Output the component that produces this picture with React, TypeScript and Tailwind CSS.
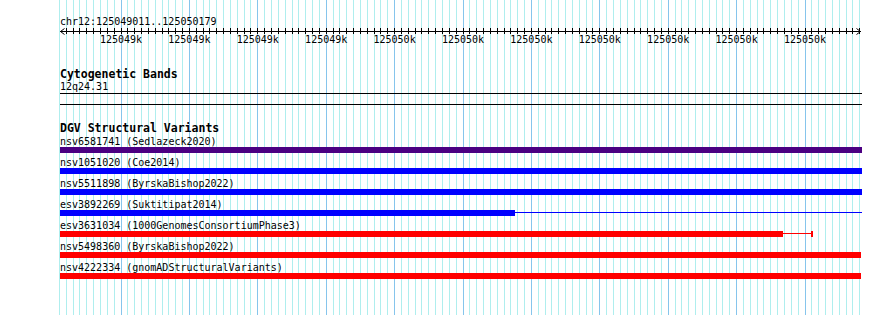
const PX_PER_BP = 0.684;
const FIRST_MAJOR_X = 121; // position of 125049100
const VIEW_LEFT = 60;

// grid / ticks every 10bp, darker every 100bp
const gridLines = Array.from({ length: 118 }, (_, i) => {
  const k = i - 9;
  return {
    x: Math.floor(FIRST_MAJOR_X + k * 10 * PX_PER_BP),
    major: ((k % 10) + 10) % 10 === 0,
  };
});

const labels = Array.from({ length: 11 }, (_, m) => {
  const bp = 125049100 + m * 100;
  return {
    x: FIRST_MAJOR_X + m * 100 * PX_PER_BP,
    text: `${Math.round(bp / 1000)}k`,
  };
});

type Variant = {
  id: string;
  source: string;
  bg: string;
  thick: number;
  thin?: number;
  cap?: boolean;
};

const variants: Variant[] = [
  { id: "nsv6581741", source: "Sedlazeck2020", bg: "bg-[#4b0082]", thick: 802 },
  { id: "nsv1051020", source: "Coe2014", bg: "bg-[#0000ff]", thick: 802 },
  { id: "nsv5511898", source: "ByrskaBishop2022", bg: "bg-[#0000ff]", thick: 802 },
  { id: "esv3892269", source: "Suktitipat2014", bg: "bg-[#0000ff]", thick: 455, thin: 347 },
  {
    id: "esv3631034",
    source: "1000GenomesConsortiumPhase3",
    bg: "bg-[#ff0000]",
    thick: 723,
    thin: 28,
    cap: true,
  },
  { id: "nsv5498360", source: "ByrskaBishop2022", bg: "bg-[#ff0000]", thick: 801 },
  { id: "nsv4222334", source: "gnomADStructuralVariants", bg: "bg-[#ff0000]", thick: 801 },
];

function Grid() {
  return (
    <svg className="absolute left-0 top-0" width={890} height={315}>
      {gridLines.map((l, i) => (
        <rect
          key={i}
          x={l.x}
          y={0}
          width={1}
          height={315}
          fill={l.major ? "#86c5ec" : "#afeeee"}
        />
      ))}
    </svg>
  );
}

function Ruler() {
  return (
    <div className="relative h-[18px]">
      <svg className="absolute left-0 top-0" width={802} height={8}>
        <rect x={0} y={3} width={801} height={1} fill="#000" />
        {gridLines.map((l, i) => (
          <rect key={i} x={l.x - VIEW_LEFT} y={0} width={1} height={6} fill="#000" />
        ))}
        <polyline points="4.5,0.5 0.5,3.5 4.5,6.5" fill="none" stroke="#000" strokeWidth={1} />
        <polyline points="796.5,0.5 800.5,3.5 796.5,6.5" fill="none" stroke="#000" strokeWidth={1} />
      </svg>
      {labels.map((l) => (
        <span
          key={l.x}
          className="absolute top-[6px] -translate-x-1/2 whitespace-nowrap text-[10px] leading-[12px]"
          style={{ left: l.x - VIEW_LEFT }}
        >
          {l.text}
        </span>
      ))}
    </div>
  );
}

function VariantRow({ v }: { v: Variant }) {
  return (
    <div className="pt-[2px] pb-[2px]">
      <div className="whitespace-pre text-[10px] leading-[11px]">
        {v.id} ({v.source})
      </div>
      <div className="flex h-[6px] items-start">
        <div className={`h-[6px] ${v.bg}`} style={{ width: v.thick }} />
        {v.thin && <div className={`mt-[2px] h-px ${v.bg}`} style={{ width: v.thin }} />}
        {v.cap && <div className={`h-[6px] w-[2px] ${v.bg}`} />}
      </div>
    </div>
  );
}

export default function App() {
  return (
    <div className="relative h-[315px] w-[890px] overflow-hidden bg-white font-['DejaVu_Sans_Mono',monospace] text-black">
      <Grid />
      <div className="relative ml-[60px] w-[802px] pt-[16px]">
        <div className="text-[10px] leading-[12px]">chr12:125049011..125050179</div>
        <Ruler />

        {/* Cytogenetic Bands */}
        <div className="mt-[22px] text-[11.5px] font-bold leading-[12px]">Cytogenetic Bands</div>
        <div className="text-[10px] leading-[13px]">12q24.31</div>
        <div className="h-[12px] border-y border-black" />

        {/* DGV Structural Variants */}
        <div className="mt-[17px] text-[11.5px] font-bold leading-[12px]">DGV Structural Variants</div>
        {variants.map((v) => (
          <VariantRow key={v.id} v={v} />
        ))}
      </div>
    </div>
  );
}
